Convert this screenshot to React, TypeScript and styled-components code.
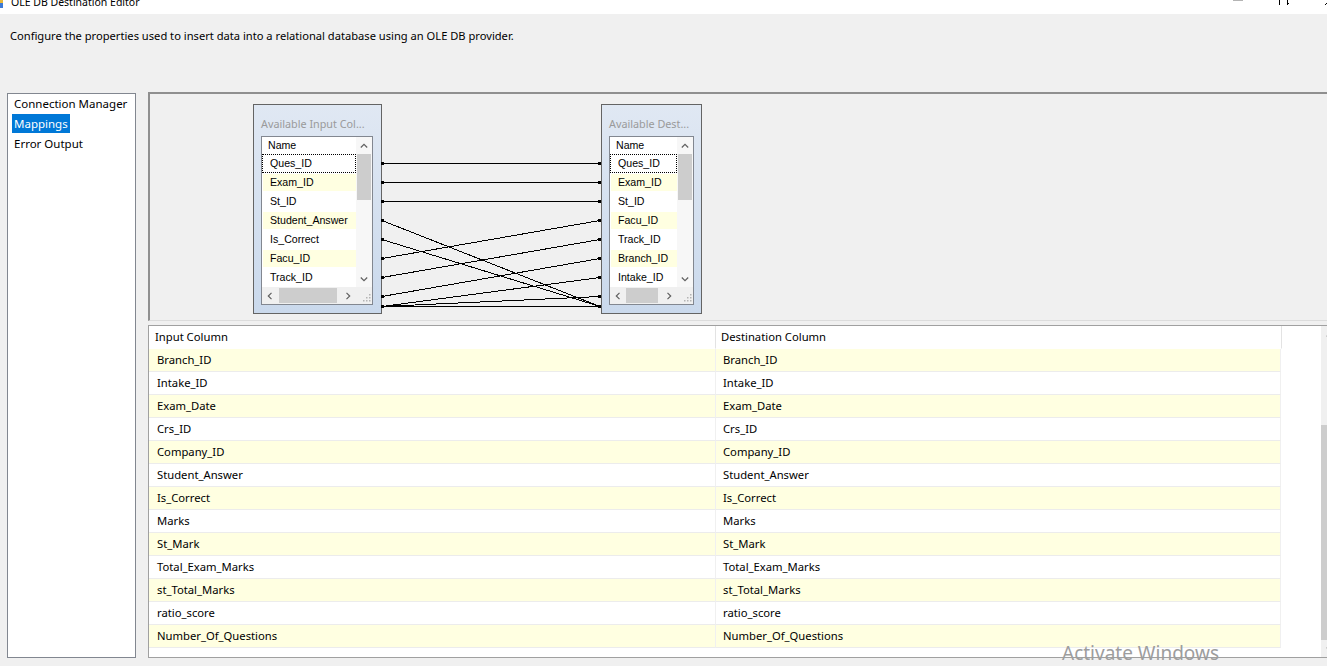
import React from "react";
import styled, { createGlobalStyle } from "styled-components";

const UI_FONT = `"Noto Sans", "Liberation Sans", Arial, sans-serif`;
const LIST_FONT = `"Liberation Sans", Arial, sans-serif`;

const GlobalStyle = createGlobalStyle`
  * { box-sizing: border-box; }
  html, body { margin: 0; padding: 0; background: #f0f0f0; overflow: hidden; }
  body { font-family: ${UI_FONT}; color: #000; }
`;

const Window = styled.div`
  position: relative;
  width: 1327px;
  height: 666px;
  overflow: hidden;
  background: #f0f0f0;
  display: flex;
  flex-direction: column;
`;

/* ---------- title bar ---------- */
const TitleBar = styled.div`
  flex: none;
  height: 14px;
  background: #fff;
  display: flex;
  align-items: flex-start;
  overflow: hidden;
`;

const AppIcon = styled.svg`
  flex: none;
  margin: -8px 0 0 -12px;
`;

const TitleText = styled.div`
  margin: -6px 0 0 7px;
  font-size: 10.5px;
  line-height: 16px;
  white-space: nowrap;
  color: #000;
`;

const CaptionButtons = styled.div`
  margin-left: auto;
  margin-right: -26px;
  display: flex;
`;

const CaptionButton = styled.div`
  width: 46px;
  height: 14px;
  display: flex;
  justify-content: center;
  align-items: flex-start;
  svg {
    margin-top: -5px;
  }
`;

/* ---------- description ---------- */
const Description = styled.div`
  flex: none;
  height: 78px;
  padding: 14px 10px 0;
  font-size: 11.15px;
  line-height: 16px;
  white-space: nowrap;
`;

/* ---------- body ---------- */
const Body = styled.div`
  flex: none;
  height: 566px;
  display: flex;
  padding-left: 7px;
  gap: 12px;
`;

const NavPanel = styled.div`
  flex: none;
  width: 129px;
  height: 565px;
  margin-top: 1px;
  background: #fff;
  border: 1px solid #828790;
  display: flex;
  flex-direction: column;
`;

const NavItem = styled.div<{ $selected?: boolean }>`
  height: 20px;
  padding-left: ${(p) => (p.$selected ? "4px" : "6px")};
  display: flex;
  align-items: flex-start;
  span {
    display: block;
    height: 19px;
    line-height: 19px;
    padding: 0 ${(p) => (p.$selected ? "2px" : "0")};
    font-size: 11.5px;
    white-space: nowrap;
    background: ${(p) => (p.$selected ? "#0078d7" : "transparent")};
    color: ${(p) => (p.$selected ? "#fff" : "#000")};
  }
`;

const RightPanel = styled.div`
  flex: none;
  width: 1191px;
  height: 566px;
  display: flex;
  flex-direction: column;
`;

/* ---------- diagram ---------- */
const DiagramPane = styled.div`
  position: relative;
  flex: none;
  height: 229px;
  background: #f0f0f0;
  border-style: solid;
  border-width: 2px 0 1px 2px;
  border-color: #8f8f8f #8f8f8f #dcdcdc #8f8f8f;
`;

const Connectors = styled.svg`
  position: absolute;
  left: 0;
  top: 0;
  pointer-events: none;
`;

const ColumnBox = styled.div<{ $left: number; $width: number; $padRight: number }>`
  position: absolute;
  left: ${(p) => p.$left}px;
  top: 10px;
  width: ${(p) => p.$width}px;
  height: 210px;
  border: 1px solid #646464;
  background: linear-gradient(#e0e8f3, #cad9ec);
  padding: 0 ${(p) => p.$padRight}px 0 7px;
  display: flex;
  flex-direction: column;
`;

const BoxTitle = styled.div`
  flex: none;
  height: 31px;
  padding-top: 11px;
  font-size: 10.8px;
  line-height: 16px;
  color: #9a9a9a;
  white-space: nowrap;
`;

const ColumnList = styled.div`
  flex: none;
  height: 169px;
  background: #fff;
  border: 1px solid #828790;
  display: grid;
  grid-template-columns: 1fr 16px;
  grid-template-rows: 150px 17px;
  font-family: ${LIST_FONT};
  font-size: 10.6px;
  color: #000;
`;

const ListRows = styled.div`
  display: flex;
  flex-direction: column;
  overflow: hidden;
`;

const ListHeader = styled.div`
  flex: none;
  height: 17px;
  line-height: 17px;
  padding-left: 6px;
  white-space: nowrap;
`;

const ListRow = styled.div<{ $alt?: boolean; $focused?: boolean }>`
  flex: none;
  height: 19px;
  padding: 1px 0 1px 1px;
  background: ${(p) => (p.$alt ? "#ffffe1" : "transparent")};
  background-clip: content-box;
  outline: ${(p) => (p.$focused ? "1px dotted #000" : "none")};
  outline-offset: -1px;
  span {
    display: block;
    line-height: 17px;
    padding-left: 7px;
    white-space: nowrap;
  }
`;

const VScroll = styled.div`
  background: #f7f7f7;
  display: flex;
  flex-direction: column;
`;

const ArrowCell = styled.div<{ $size?: number }>`
  flex: none;
  width: ${(p) => p.$size ?? 16}px;
  height: ${(p) => p.$size ?? 17}px;
  display: flex;
  align-items: center;
  justify-content: center;
`;

const VThumb = styled.div`
  flex: none;
  height: 46px;
  margin: 0 1px;
  background: #cdcdcd;
`;

const Spacer = styled.div`
  flex: 1;
`;

const HScroll = styled.div`
  background: #f0f0f0;
  display: flex;
  align-items: stretch;
`;

const HThumb = styled.div<{ $w: number; $ml: number }>`
  flex: none;
  width: ${(p) => p.$w}px;
  margin: 1px 0 1px ${(p) => p.$ml}px;
  background: #cdcdcd;
`;

const Grip = styled.div`
  background: #f0f0f0;
  display: flex;
  align-items: flex-end;
  justify-content: flex-end;
  padding: 0 1px 2px 0;
`;

/* ---------- mapping grid ---------- */
const Splitter = styled.div`
  flex: none;
  height: 4px;
  background: #f0f0f0;
`;

const MappingGrid = styled.div`
  flex: none;
  height: 333px;
  background: #fff;
  border-style: solid;
  border-width: 1px 0 1px 1px;
  border-color: #a0a0a0;
  display: flex;
`;

const GridBody = styled.div`
  flex: none;
  width: 1172px;
  display: flex;
  flex-direction: column;
`;

const GridRow = styled.div`
  flex: none;
  height: 23px;
  display: flex;
`;

const Cell = styled.div<{ $w: number; $pad: number; $alt?: boolean; $header?: boolean }>`
  flex: none;
  width: ${(p) => p.$w}px;
  height: 23px;
  line-height: 22px;
  padding-left: ${(p) => p.$pad}px;
  font-size: 11.25px;
  white-space: nowrap;
  background: ${(p) => (p.$alt ? "#ffffe1" : "#fff")};
  border-right: 1px solid ${(p) => (p.$header ? "#e3e3e3" : "#f0f0f0")};
  border-bottom: 1px solid ${(p) => (p.$header ? "#ffffff" : "#ececec")};
`;

const GridScrollbar = styled.div`
  flex: none;
  width: 17px;
  background: #f0f0f0;
  display: flex;
  flex-direction: column;
`;

const GridThumb = styled.div`
  flex: none;
  height: 215px;
  background: #cdcdcd;
`;

const Watermark = styled.div`
  position: absolute;
  left: 1062px;
  top: 641px;
  font-size: 19px;
  line-height: 24px;
  color: #9d9d9d;
  white-space: nowrap;
  pointer-events: none;
`;

/* ---------- glyphs ---------- */
const Chevron: React.FC<{ dir: "up" | "down" | "left" | "right" }> = ({ dir }) => {
  const rot = { up: 0, right: 90, down: 180, left: 270 }[dir];
  return (
    <svg width="8" height="8" viewBox="0 0 8 8" style={{ transform: `rotate(${rot}deg)` }}>
      <path d="M0.8 5.5 L4 2.3 L7.2 5.5" fill="none" stroke="#606060" strokeWidth="1.2" />
    </svg>
  );
};

const GripDots = () => (
  <svg width="10" height="10" viewBox="0 0 10 10">
    {[
      [8, 2],
      [8, 5],
      [5, 5],
      [8, 8],
      [5, 8],
      [2, 8],
    ].map(([x, y], i) => (
      <rect key={i} x={x} y={y} width="1.5" height="1.5" fill="#b4b4b4" />
    ))}
  </svg>
);

/* ---------- data ---------- */
const inputCols = ["Ques_ID", "Exam_ID", "St_ID", "Student_Answer", "Is_Correct", "Facu_ID", "Track_ID"];
const destCols = ["Ques_ID", "Exam_ID", "St_ID", "Facu_ID", "Track_ID", "Branch_ID", "Intake_ID"];

const mappings = [
  "Branch_ID",
  "Intake_ID",
  "Exam_Date",
  "Crs_ID",
  "Company_ID",
  "Student_Answer",
  "Is_Correct",
  "Marks",
  "St_Mark",
  "Total_Exam_Marks",
  "st_Total_Marks",
  "ratio_score",
  "Number_Of_Questions",
];

/* page coordinates of the connector end points */
const OX = 150;
const OY = 94;
const links: [number, number][] = [
  [163, 163],
  [182, 182],
  [201, 201],
  [220, 306],
  [239, 306],
  [258, 220],
  [277, 239],
  [296, 258],
  [306, 277],
  [306, 296],
  [306, 306],
];

const ColumnPanel: React.FC<{
  left: number;
  width: number;
  padRight: number;
  title: string;
  rows: string[];
  thumbW: number;
  thumbMl: number;
}> = ({ left, width, padRight, title, rows, thumbW, thumbMl }) => (
  <ColumnBox $left={left} $width={width} $padRight={padRight}>
    <BoxTitle>{title}</BoxTitle>
    <ColumnList>
      <ListRows>
        <ListHeader>Name</ListHeader>
        {rows.map((r, i) => (
          <ListRow key={r} $alt={i % 2 === 1} $focused={i === 0}>
            <span>{r}</span>
          </ListRow>
        ))}
      </ListRows>
      <VScroll>
        <ArrowCell>
          <Chevron dir="up" />
        </ArrowCell>
        <VThumb />
        <Spacer />
        <ArrowCell>
          <Chevron dir="down" />
        </ArrowCell>
      </VScroll>
      <HScroll>
        <ArrowCell>
          <Chevron dir="left" />
        </ArrowCell>
        <HThumb $w={thumbW} $ml={thumbMl} />
        <Spacer />
        <ArrowCell>
          <Chevron dir="right" />
        </ArrowCell>
      </HScroll>
      <Grip>
        <GripDots />
      </Grip>
    </ColumnList>
  </ColumnBox>
);

export default function App() {
  return (
    <>
      <GlobalStyle />
      <Window>
        <TitleBar>
          <AppIcon width="16" height="16" viewBox="0 0 16 16">
            <rect x="9" y="2" width="6" height="9" fill="#e8b93a" />
            <rect x="9" y="11" width="6" height="5" fill="#3d7ad6" />
          </AppIcon>
          <TitleText>OLE DB Destination Editor</TitleText>
          <CaptionButtons>
            <CaptionButton>
              <svg width="10" height="10" viewBox="0 0 10 10">
                <line x1="0" y1="5.5" x2="10" y2="5.5" stroke="#b4b4b4" strokeWidth="1" />
              </svg>
            </CaptionButton>
            <CaptionButton>
              <svg width="10" height="10" viewBox="0 0 10 10">
                <rect x="0.5" y="2.5" width="8" height="8" fill="none" stroke="#000" strokeWidth="1" />
                <path d="M2.5 2.5 V0.5 H10.5 V8.5 H8.5" fill="none" stroke="#000" strokeWidth="1" />
              </svg>
            </CaptionButton>
            <CaptionButton>
              <svg width="10" height="10" viewBox="0 0 10 10">
                <path d="M0 0 L10 10 M10 0 L0 10" stroke="#000" strokeWidth="1" />
              </svg>
            </CaptionButton>
          </CaptionButtons>
        </TitleBar>

        <Description>
          Configure the properties used to insert data into a relational database using an OLE DB provider.
        </Description>

        <Body>
          <NavPanel>
            <NavItem>
              <span>Connection Manager</span>
            </NavItem>
            <NavItem $selected>
              <span>Mappings</span>
            </NavItem>
            <NavItem>
              <span>Error Output</span>
            </NavItem>
          </NavPanel>

          <RightPanel>
            <DiagramPane>
              <ColumnPanel
                left={253 - OX}
                width={129}
                padRight={8}
                title="Available Input Col..."
                rows={inputCols}
                thumbW={58}
                thumbMl={1}
              />
              <ColumnPanel
                left={601 - OX}
                width={101}
                padRight={7}
                title="Available Dest..."
                rows={destCols}
                thumbW={32}
                thumbMl={0}
              />
              <Connectors width="600" height="226" viewBox="0 0 600 226" shapeRendering="crispEdges">
                {links.map(([yl, yr], i) => (
                  <g key={i}>
                    <line x1={382 - OX} y1={yl - OY + 0.5} x2={600 - OX} y2={yr - OY + 0.5} stroke="#000" strokeWidth="1" />
                    <rect x={381 - OX} y={yl - OY - 1} width="3" height="3" fill="#000" />
                    <rect x={598 - OX} y={yr - OY - 1} width="3" height="3" fill="#000" />
                  </g>
                ))}
              </Connectors>
            </DiagramPane>

            <Splitter />

            <MappingGrid>
              <GridBody>
                <GridRow>
                  <Cell $w={567} $pad={6} $header>
                    Input Column
                  </Cell>
                  <Cell $w={566} $pad={5} $header>
                    Destination Column
                  </Cell>
                </GridRow>
                {mappings.map((m, i) => (
                  <GridRow key={m}>
                    <Cell $w={567} $pad={8} $alt={i % 2 === 0}>
                      {m}
                    </Cell>
                    <Cell $w={565} $pad={7} $alt={i % 2 === 0}>
                      {m}
                    </Cell>
                  </GridRow>
                ))}
              </GridBody>
              <GridScrollbar>
                <ArrowCell $size={17}>
                  <Chevron dir="up" />
                </ArrowCell>
                <Spacer />
                <GridThumb />
                <ArrowCell $size={17}>
                  <Chevron dir="down" />
                </ArrowCell>
              </GridScrollbar>
            </MappingGrid>
          </RightPanel>
        </Body>

        <Watermark>Activate Windows</Watermark>
      </Window>
    </>
  );
}
